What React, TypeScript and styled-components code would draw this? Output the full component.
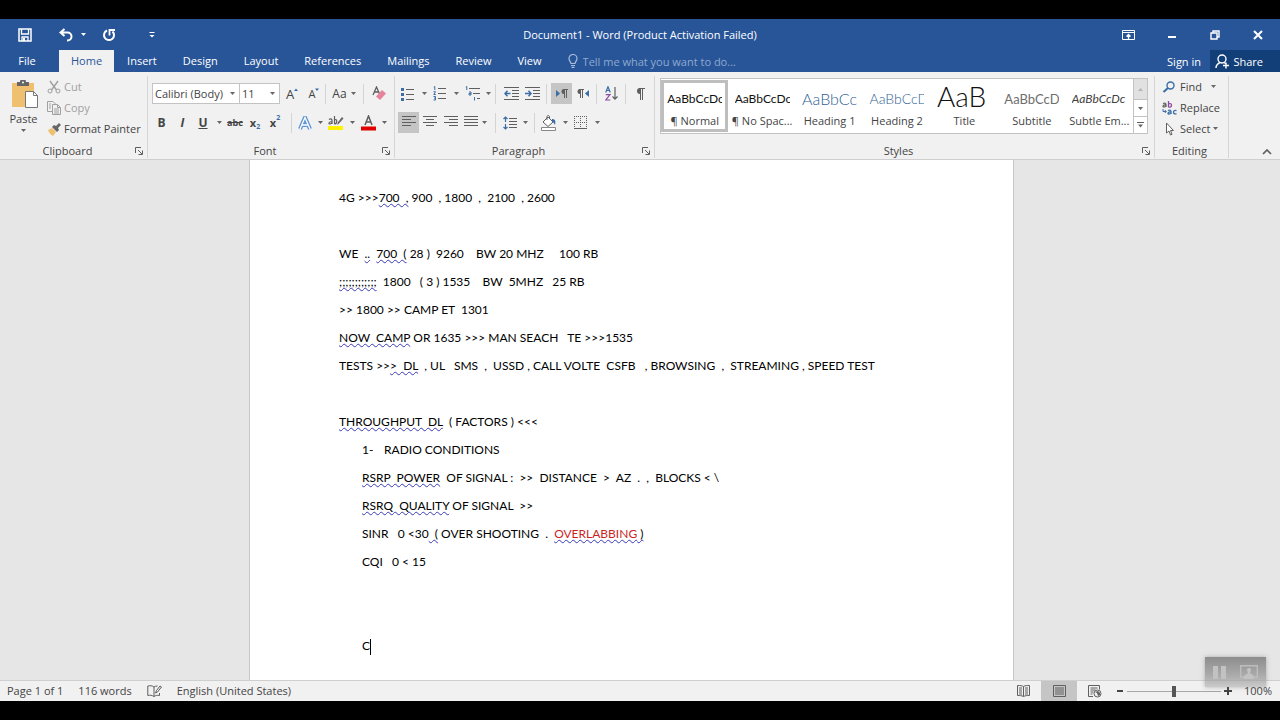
import React from "react";
import styled, { createGlobalStyle, css } from "styled-components";

const UI = `"Open Sans", "Noto Sans", "Liberation Sans", sans-serif`;
const DOC = `Lato, "Liberation Sans", sans-serif`;

const color = {
  blue: "#285598",
  share: "#133f78",
  ribbon: "#f1f1f1",
  canvas: "#e6e6e6",
  line: "#cfcfcf",
  text: "#444444",
  icon: "#5f5f5f",
  accent: "#3a6ea5",
  active: "#c5c5c5",
  muted: "#a0a0a0",
};

const GlobalStyle = createGlobalStyle`
  * { box-sizing: border-box; }
  body { margin: 0; background: #000; font-family: ${UI}; font-size: 11px; color: ${color.text}; }
  button, select, input { font: inherit; color: inherit; }
  svg { display: block; flex: none; }
`;

const Screen = styled.div`
  position: relative;
  display: flex;
  flex-direction: column;
  height: 100vh;
  padding: 19px 0;
  background: #000;
`;

const Plain = styled.button`
  display: flex;
  align-items: center;
  justify-content: center;
  margin: 0;
  padding: 0;
  border: 0;
  background: transparent;
  white-space: nowrap;
`;

/* title bar */

const TitleBar = styled.header`
  display: grid;
  grid-template-columns: 1fr auto 1fr;
  align-items: center;
  flex: none;
  height: 31px;
  background: ${color.blue};
  color: #fff;
`;

const QuickAccess = styled.div`
  display: flex;
  align-items: center;
  padding-left: 14px;
`;

const BarButton = styled(Plain)<{ $w: number; $before?: number }>`
  width: ${(p) => p.$w}px;
  height: 27px;
  margin-left: ${(p) => p.$before ?? 0}px;
`;

const WindowTitle = styled.h1`
  margin: 0;
  font-size: 11px;
  font-weight: 400;
  line-height: 16px;
`;

const WindowButtons = styled.div`
  display: flex;
  justify-content: flex-end;
`;

/* tab strip */

const TabStrip = styled.nav`
  display: flex;
  align-items: stretch;
  flex: none;
  height: 22px;
  background: ${color.blue};
  color: #fff;
`;

const Tab = styled(Plain)<{ $active?: boolean; $file?: boolean }>`
  padding: 0 ${(p) => (p.$active ? 12 : 13)}px;
  line-height: 22px;
  ${(p) => p.$file && css`width: 59px; padding: 0 5px 0 0;`}
  ${(p) => p.$active && css`background: ${color.ribbon}; color: ${color.blue};`}
`;

const TellMe = styled.label`
  display: flex;
  align-items: center;
  flex: 1;
  gap: 5px;
  padding-left: 13px;
  color: #a9bddb;
`;

const TellMeInput = styled.input`
  flex: 1;
  min-width: 0;
  padding: 0;
  border: 0;
  outline: 0;
  background: transparent;
  &::placeholder { color: #8eaad0; opacity: 1; }
`;

const SignIn = styled(Plain)`
  padding: 0 9px;
`;

const Share = styled(Plain)`
  gap: 3px;
  width: 70px;
  padding-right: 17px;
  justify-content: flex-end;
  background: ${color.share};
`;

/* ribbon */

const Ribbon = styled.section`
  display: flex;
  flex: none;
  height: 88px;
  padding-top: 4px;
  border-bottom: 1px solid ${color.line};
  background: ${color.ribbon};
`;

const Group = styled.section<{ $w?: number }>`
  display: flex;
  flex-direction: column;
  ${(p) => (p.$w ? css`flex: none; width: ${p.$w}px;` : css`flex: 1; min-width: 0;`)}
  height: 82px;
  border-right: 1px solid #d6d6d6;
`;

const GroupBody = styled.div`
  flex: 1;
  min-height: 0;
`;

const GroupFoot = styled.footer`
  display: flex;
  align-items: center;
  height: 14px;
  padding-right: 4px;
  line-height: 14px;
`;

const GroupName = styled.span`
  flex: 1;
  text-align: center;
`;

const Tail = styled.div`
  display: flex;
  align-items: flex-end;
  justify-content: flex-end;
  flex: none;
  width: 51px;
  padding: 0 8px 4px 0;
`;

const Row = styled.div<{ $pad: number; $top: number }>`
  display: flex;
  align-items: center;
  height: 21px;
  padding-left: ${(p) => p.$pad}px;
  margin-top: ${(p) => p.$top}px;
`;

const Tool = styled(Plain)<{ $w: number; $on?: boolean }>`
  flex: none;
  width: ${(p) => p.$w}px;
  height: 21px;
  background: ${(p) => (p.$on ? color.active : "transparent")};
`;

const Glyph = styled.span<{ $size?: number; $bold?: boolean; $italic?: boolean; $line?: string }>`
  font-size: ${(p) => p.$size ?? 12}px;
  font-weight: ${(p) => (p.$bold ? 700 : 400)};
  font-style: ${(p) => (p.$italic ? "italic" : "normal")};
  text-decoration: ${(p) => p.$line ?? "none"};
  line-height: 16px;
`;

const Script = styled.span<{ $up?: boolean }>`
  align-self: ${(p) => (p.$up ? "flex-start" : "flex-end")};
  padding: 2px 0;
  color: ${color.accent};
  font-size: 7px;
  font-weight: 700;
  line-height: 8px;
`;

const Divider = styled.span<{ $before?: number; $after?: number }>`
  flex: none;
  width: 1px;
  height: 20px;
  margin-left: ${(p) => p.$before ?? 4}px;
  margin-right: ${(p) => p.$after ?? 4}px;
  background: #d4d4d4;
`;

const SelectWrap = styled.label<{ $w: number }>`
  position: relative;
  flex: none;
  width: ${(p) => p.$w}px;
  height: 21px;
  & + & { margin-left: -1px; }
  svg { position: absolute; right: 5px; top: 9px; pointer-events: none; }
`;

const Select = styled.select`
  width: 100%;
  height: 21px;
  padding: 0 0 0 2px;
  border: 1px solid #c3c3c3;
  border-radius: 0;
  background: #fff;
  appearance: none;
`;

const ClipboardBody = styled(GroupBody)`
  display: flex;
`;

const PasteButton = styled(Plain)`
  flex-direction: column;
  justify-content: flex-start;
  width: 47px;
  padding-top: 4px;
  line-height: 16px;
  gap: 2px;
`;

const Stack = styled.div<{ $pad?: number }>`
  display: flex;
  flex-direction: column;
  align-items: flex-start;
  padding-left: ${(p) => p.$pad ?? 0}px;
`;

const TextTool = styled(Plain)<{ $off?: boolean }>`
  flex: none;
  gap: 3px;
  height: 21px;
  color: ${(p) => (p.$off ? color.muted : color.text)};
`;

const Gallery = styled.div`
  display: grid;
  grid-template-columns: minmax(0, 1fr) 14px;
  height: 56px;
  margin: 2px 6px 0 5px;
  border: 1px solid #c3c3c3;
  background: #fff;
`;

const Cards = styled.div`
  display: grid;
  grid-template-columns: repeat(7, minmax(0, 1fr));
  padding: 1px 0;
`;

const Card = styled(Plain)<{ $on?: boolean }>`
  flex-direction: column;
  justify-content: flex-end;
  overflow: hidden;
  border: 3px solid ${(p) => (p.$on ? "#bebebe" : "transparent")};
`;

const Sample = styled.span<{ $size: number; $line?: number; $weight?: number; $color?: string; $italic?: boolean }>`
  width: 55px;
  height: 28px;
  overflow: hidden;
  color: ${(p) => p.$color ?? "#111"};
  font-family: ${DOC};
  font-size: ${(p) => p.$size}px;
  font-style: ${(p) => (p.$italic ? "italic" : "normal")};
  font-weight: ${(p) => p.$weight ?? 400};
  line-height: ${(p) => p.$line ?? 28}px;
  text-align: left;
`;

const CardName = styled.span`
  line-height: 16px;
`;

const Scroller = styled.div`
  display: grid;
  grid-template-rows: 20px 17px 17px;
  border-left: 1px solid #c3c3c3;
`;

const ScrollButton = styled(Plain)<{ $off?: boolean }>`
  background: ${(p) => (p.$off ? "#e1e1e1" : "#fff")};
  & + & { border-top: 1px solid #c3c3c3; }
`;

/* document */

const Canvas = styled.main`
  display: flex;
  justify-content: center;
  flex: 1;
  min-height: 0;
  overflow: hidden;
  padding-right: 17px;
  background: ${color.canvas};
`;

const Sheet = styled.article`
  width: 765px;
  padding: 24px 80px 20px 89px;
  border: solid #c8c8c8;
  border-width: 0 1px;
  background: #fff;
  color: #000;
  font-family: ${DOC};
  font-size: 12px;
`;

const Line = styled.p<{ $indent?: boolean }>`
  height: 28px;
  margin: 0;
  padding-left: ${(p) => (p.$indent ? 23 : 0)}px;
  line-height: 28px;
  white-space: pre;
`;

const Flag = styled.span`
  text-decoration: underline wavy #3a38b8 1px;
  text-decoration-skip-ink: none;
  text-underline-offset: 1px;
`;

const Red = styled.span`
  color: #cc1f1f;
`;

const Marker = styled.span`
  display: inline-block;
  width: 22px;
`;

const Caret = styled.span`
  display: inline-block;
  width: 1px;
  height: 16px;
  background: #000;
  vertical-align: middle;
`;

/* status bar */

const StatusBar = styled.footer`
  display: flex;
  align-items: stretch;
  flex: none;
  height: 21px;
  border-top: 1px solid ${color.line};
  background: ${color.ribbon};
  line-height: 20px;
`;

const StatusItem = styled.span<{ $left: number }>`
  display: flex;
  align-items: center;
  padding-left: ${(p) => p.$left}px;
  white-space: nowrap;
`;

const Spacer = styled.div`
  flex: 1;
`;

const View = styled(Plain)<{ $on?: boolean }>`
  width: 36px;
  background: ${(p) => (p.$on ? color.active : "transparent")};
`;

const ZoomButton = styled(Plain)`
  width: 14px;
`;

const Zoom = styled.input`
  width: 94px;
  height: 20px;
  margin: 0;
  appearance: none;
  background: linear-gradient(#a8a8a8, #a8a8a8) center / 100% 1px no-repeat;
  &::-webkit-slider-thumb { appearance: none; width: 4px; height: 11px; background: #555; }
`;

const Percent = styled.output`
  width: 45px;
  padding-right: 8px;
  text-align: right;
`;

const Recorder = styled.aside`
  position: absolute;
  right: 14px;
  bottom: 33px;
  display: flex;
  align-items: center;
  justify-content: center;
  gap: 14px;
  width: 61px;
  height: 30px;
  background: linear-gradient(rgba(125, 125, 125, 0.85), rgba(150, 150, 150, 0.75) 60%, rgba(175, 175, 175, 0.6));
  box-shadow: 0 0 4px rgba(110, 110, 110, 0.5);
`;

/* icons */

type IconProps = { w: number; h: number; children: React.ReactNode; stroke?: string };
const Icon = ({ w, h, children, stroke = color.icon }: IconProps) => (
  <svg width={w} height={h} viewBox={`0 0 ${w} ${h}`} fill="none" stroke={stroke} aria-hidden="true">
    {children}
  </svg>
);

const Drop = ({ fill = "#666" }: { fill?: string }) => (
  <svg width="5" height="3" viewBox="0 0 5 3" aria-hidden="true">
    <path d="M0 0h5L2.500 3z" fill={fill} />
  </svg>
);

const Launcher = () => (
  <Icon w={8} h={8}>
    <path d="M.5 6V.5H6M3 3l4 4M7.500 3.500v4h-4" />
  </Icon>
);

const Foot = ({ label, launch = true }: { label: string; launch?: boolean }) => (
  <GroupFoot>
    <GroupName>{label}</GroupName>
    {launch && (
      <Plain aria-label={`${label} settings`}>
        <Launcher />
      </Plain>
    )}
  </GroupFoot>
);

const Lines = ({ rows }: { rows: [number, number][] }) => (
  <Icon w={14} h={13}>
    {rows.map(([a, b], i) => (
      <path key={i} d={`M${a} ${i * 3 + 0.5}H${b}`} />
    ))}
  </Icon>
);

const DropTool = ({ w = 6, label }: { w?: number; label: string }) => (
  <Tool $w={w} aria-label={label}>
    <Drop />
  </Tool>
);

const tabs = ["Insert", "Design", "Layout", "References", "Mailings", "Review", "View"];

const styles = [
  { name: "¶ Normal", text: "AaBbCcDc", size: 12 },
  { name: "¶ No Spac...", text: "AaBbCcDc", size: 12 },
  { name: "Heading 1", text: "AaBbCc", size: 16, weight: 300, color: "#2e5f95" },
  { name: "Heading 2", text: "AaBbCcD", size: 14, weight: 300, color: "#2e5f95" },
  { name: "Title", text: "AaB", size: 28, line: 22, weight: 300 },
  { name: "Subtitle", text: "AaBbCcD", size: 13, color: "#6e6e6e" },
  { name: "Subtle Em...", text: "AaBbCcDc", size: 12, color: "#404040", italic: true },
];

export default function App() {
  return (
    <Screen>
      <GlobalStyle />
      <TitleBar>
        <QuickAccess>
          <BarButton $w={22} aria-label="Save">
            <Icon w={14} h={14} stroke="#fff">
              <path d="M1 1h12v12H1z" strokeWidth="1.500" />
              <path d="M3.500 1v5h7V1M4 13V9h6v4" strokeWidth="1.300" />
              <path d="M5 10h2v3H5z" fill="#fff" stroke="none" />
            </Icon>
          </BarButton>
          <BarButton $w={24} $before={18} aria-label="Undo">
            <Icon w={14} h={14} stroke="#fff">
              <path d="M5.500 1L1.500 4.500l4 3.500M2 4.500h6.500a4 4 0 0 1 0 8H8" strokeWidth="2" />
            </Icon>
          </BarButton>
          <BarButton $w={6} $before={2} aria-label="Undo history">
            <Drop fill="#fff" />
          </BarButton>
          <BarButton $w={18} $before={14} aria-label="Repeat">
            <Icon w={14} h={14} stroke="#fff">
              <path d="M5 2.500A5 5 0 1 0 10.500 3.500" strokeWidth="2" />
              <path d="M7.500 7.500V2H13" strokeWidth="1.800" />
            </Icon>
          </BarButton>
          <BarButton $w={16} $before={26} aria-label="Customize Quick Access Toolbar">
            <Icon w={6} h={6} stroke="#fff">
              <path d="M.5 .5h5" />
              <path d="M.5 3h5L3 5.500z" fill="#fff" stroke="none" />
            </Icon>
          </BarButton>
        </QuickAccess>
        <WindowTitle>Document1 - Word (Product Activation Failed)</WindowTitle>
        <WindowButtons>
          <BarButton $w={44} aria-label="Ribbon display options">
            <Icon w={13} h={10} stroke="#fff">
              <path d="M.5 .5h12v9H.5zM.5 2.500h12" />
              <path d="M6.500 9V5M4.500 6.500l2-2 2 2" strokeWidth="1.300" />
            </Icon>
          </BarButton>
          <BarButton $w={43} aria-label="Minimize">
            <Icon w={8} h={8} stroke="#fff">
              <path d="M0 6h8" strokeWidth="2" />
            </Icon>
          </BarButton>
          <BarButton $w={43} aria-label="Restore">
            <Icon w={10} h={10} stroke="#fff">
              <path d="M3 3V1h6v6H7M1 3h6v6H1z" strokeWidth="1.400" />
            </Icon>
          </BarButton>
          <BarButton $w={44} aria-label="Close">
            <Icon w={10} h={10} stroke="#fff">
              <path d="M1 1l8 8M9 1L1 9" strokeWidth="2" />
            </Icon>
          </BarButton>
        </WindowButtons>
      </TitleBar>

      <TabStrip>
        <Tab $file>File</Tab>
        <Tab $active>Home</Tab>
        {tabs.map((t) => (
          <Tab key={t}>{t}</Tab>
        ))}
        <TellMe>
          <Icon w={10} h={14} stroke="#a9bddb">
            <path d="M3 9.500C3 8 1 7 1 4.500a4 4 0 0 1 8 0C9 7 7 8 7 9.500zM3 11.500h4M3.500 13.400h3" strokeWidth="1.200" />
          </Icon>
          <TellMeInput aria-label="Tell me" placeholder="Tell me what you want to do..." />
        </TellMe>
        <SignIn>Sign in</SignIn>
        <Share>
          <Icon w={15} h={15} stroke="#fff">
            <circle cx="7" cy="5" r="4" strokeWidth="1.400" />
            <path d="M1 14c0-3 2-4.500 4-5.500M9 8.500l1.500 1M11 8.500v6M8 11.500h6" strokeWidth="1.400" />
          </Icon>
          Share
        </Share>
      </TabStrip>

      <Ribbon>
        <Group $w={148}>
          <ClipboardBody>
            <PasteButton>
              <Icon w={28} h={29}>
                <path d="M2 3h22v24H2z" fill="#eec06f" stroke="none" />
                <path d="M7 2h3a3 3 0 0 1 6 0h3v4H7z" fill="#666" stroke="none" />
                <circle cx="13" cy="2.500" r="1" fill="#fff" stroke="none" />
                <path d="M15.500 11.500h8l4 4v12h-12z" fill="#fff" stroke="#777" />
                <path d="M23.500 11.500v4h4" stroke="#777" />
              </Icon>
              Paste
              <Drop />
            </PasteButton>
            <Stack>
              <TextTool $off>
                <Icon w={14} h={14} stroke={color.muted}>
                  <path d="M3 1l6.500 9M11 1L4.500 10" strokeWidth="1.400" />
                  <circle cx="3" cy="11" r="2" />
                  <circle cx="11" cy="11" r="2" />
                </Icon>
                Cut
              </TextTool>
              <TextTool $off>
                <Icon w={14} h={14} stroke={color.muted}>
                  <path d="M6 10.500H.5V.5H6L8.500 3M5.500 3.500h5l3 3v7h-8zM10.500 3.500v3h3M7 8h5M7 10h5M7 12h5M2 3h2M2 5h2M2 7h2" />
                </Icon>
                Copy
              </TextTool>
              <TextTool>
                <Icon w={14} h={14}>
                  <path d="M1 8l4-2 4 4-3 4c-2-1-4-3-5-6z" fill="#eec06f" stroke="none" />
                  <path d="M5 5l2-2 2 1 3-3 2 2-3 3 1 2-2 2z" fill="#666" stroke="none" />
                </Icon>
                Format Painter
              </TextTool>
            </Stack>
          </ClipboardBody>
          <Foot label="Clipboard" />
        </Group>

        <Group $w={247}>
          <GroupBody>
            <Row $pad={4} $top={7}>
              <SelectWrap $w={88}>
                <Select aria-label="Font">
                  <option>Calibri (Body)</option>
                </Select>
                <Drop />
              </SelectWrap>
              <SelectWrap $w={41}>
                <Select aria-label="Font size">
                  <option>11</option>
                </Select>
                <Drop />
              </SelectWrap>
              <Tool $w={24} aria-label="Grow font">
                <Glyph $size={13}>A</Glyph>
                <Icon w={4} h={12}>
                  <path d="M0 3l2-2.500L4 3z" fill={color.accent} stroke="none" />
                </Icon>
              </Tool>
              <Tool $w={20} aria-label="Shrink font">
                <Glyph $size={11}>A</Glyph>
                <Icon w={4} h={12}>
                  <path d="M0 .5h4L2 3z" fill={color.accent} stroke="none" />
                </Icon>
              </Tool>
              <Divider $before={1} $after={3} />
              <Tool $w={21} aria-label="Change case">
                <Glyph>Aa</Glyph>
              </Tool>
              <DropTool label="Change case options" />
              <Divider $before={7} $after={5} />
              <Tool $w={20} aria-label="Clear formatting">
                <Icon w={14} h={15}>
                  <path d="M1 9L4.500 1 8 9M2.200 6h4.600" strokeWidth="1.300" />
                  <path d="M4 10.500L10 4l4 3.500L8 14z" fill="#e5849a" stroke="none" />
                </Icon>
              </Tool>
            </Row>
            <Row $pad={3} $top={8}>
              <Tool $w={21} aria-label="Bold">
                <Glyph $bold>B</Glyph>
              </Tool>
              <Tool $w={21} aria-label="Italic">
                <Glyph $bold $italic>I</Glyph>
              </Tool>
              <Tool $w={20} aria-label="Underline">
                <Glyph $bold $line="underline">U</Glyph>
              </Tool>
              <DropTool w={12} label="Underline options" />
              <Tool $w={20} aria-label="Strikethrough">
                <Glyph $size={9} $bold $line="line-through">abc</Glyph>
              </Tool>
              <Tool $w={20} aria-label="Subscript">
                <Glyph $size={11} $bold>x</Glyph>
                <Script>2</Script>
              </Tool>
              <Tool $w={20} aria-label="Superscript">
                <Glyph $size={11} $bold>x</Glyph>
                <Script $up>2</Script>
              </Tool>
              <Divider $before={6} $after={1} />
              <Tool $w={24} aria-label="Text effects">
                <Icon w={14} h={14}>
                  <path d="M2 13L7 1.500 12 13M4 9h6" stroke="#5f94d2" strokeWidth="4" />
                  <path d="M2 13L7 1.500 12 13M4 9h6" stroke="#fff" strokeWidth="1.300" />
                </Icon>
              </Tool>
              <DropTool label="Text effects options" />
              <Tool $w={26} aria-label="Highlight color">
                <Icon w={16} h={16}>
                  <path d="M0 11h15v4H0z" fill="#fff200" stroke="none" />
                  <path d="M1 4.500c2-1.500 3 0 3 1V9M4 6.500C1 6.500 0 9 2 9c1 0 2-1 2-2M6.500 1v8M6.500 5c3-2 3 4 0 4" strokeWidth="1.200" />
                  <path d="M9 10l1-3 4-5 1.500 1.500-4.500 5z" fill="#666" stroke="none" />
                </Icon>
              </Tool>
              <DropTool label="Highlight color options" />
              <Tool $w={26} aria-label="Font color">
                <Icon w={15} h={16}>
                  <path d="M0 11.500h15v4H0z" fill="#e00000" stroke="none" />
                  <path d="M4 10l3.500-9L11 10M5 7h5" strokeWidth="1.500" />
                </Icon>
              </Tool>
              <DropTool label="Font color options" />
            </Row>
          </GroupBody>
          <Foot label="Font" />
        </Group>

        <Group $w={260}>
          <GroupBody>
            <Row $pad={0} $top={7}>
              <Tool $w={26} aria-label="Bullets">
                <Icon w={14} h={14}>
                  <path d="M5 2.500h8M5 7.500h8M5 12.500h8" />
                  <path d="M0 1h3v3H0zM0 6h3v3H0zM0 11h3v3H0z" fill={color.accent} stroke="none" />
                </Icon>
              </Tool>
              <DropTool label="Bullet library" />
              <Tool $w={26} aria-label="Numbering">
                <Icon w={14} h={15}>
                  <path d="M5 2.500h8M5 7.500h8M5 12.500h8" />
                  <path d="M.8 1l1-.5V4M.5 5.700h2L.8 8.500h2M.5 10.500h2v3.500h-2M1 12.200h1.500" stroke={color.accent} />
                </Icon>
              </Tool>
              <DropTool label="Numbering library" />
              <Tool $w={26} aria-label="Multilevel list">
                <Icon w={15} h={15}>
                  <path d="M4 2.500h11M8 7.500h7M12 12.500h3" />
                  <path d="M.8 1l1-.5V4M4 6h2v3H4v-1.500h2M9.500 11v3.500" stroke={color.accent} />
                </Icon>
              </Tool>
              <DropTool label="List library" />
              <Divider />
              <Tool $w={22} aria-label="Decrease indent">
                <Icon w={15} h={13}>
                  <path d="M0 .5h15M8 3.500h7M8 6.500h7M8 9.500h7M0 12.500h15" />
                  <path d="M6.500 6.500H1M3.500 3.800L1 6.500l2.500 2.700" stroke={color.accent} strokeWidth="1.500" />
                </Icon>
              </Tool>
              <Tool $w={20} aria-label="Increase indent">
                <Icon w={15} h={13}>
                  <path d="M0 .5h15M8 3.500h7M8 6.500h7M8 9.500h7M0 12.500h15" />
                  <path d="M0 6.500h6M3.500 3.800L6 6.500 3.500 9.200" stroke={color.accent} strokeWidth="1.500" />
                </Icon>
              </Tool>
              <Divider />
              <Tool $w={21} $on aria-label="Left-to-right">
                <Icon w={12} h={9}>
                  <path d="M0 1v7l4-3.500z" fill={color.accent} stroke="none" />
                  <path d="M8.500 0v9M10.500 0v9M7 .5h5" />
                  <path d="M8 0a2.500 2.500 0 0 0 0 5z" fill={color.icon} stroke="none" />
                </Icon>
              </Tool>
              <Tool $w={21} aria-label="Right-to-left">
                <Icon w={12} h={9}>
                  <path d="M12 1v7L8 4.500z" fill={color.accent} stroke="none" />
                  <path d="M3.500 0v9M5.500 0v9M2 .5h5" />
                  <path d="M3 0a2.500 2.500 0 0 0 0 5z" fill={color.icon} stroke="none" />
                </Icon>
              </Tool>
              <Divider $before={3} />
              <Tool $w={20} aria-label="Sort">
                <Icon w={13} h={15}>
                  <path d="M.7 6.500L3 .7l2.300 5.800M1.500 4.500h3" stroke={color.accent} strokeWidth="1.200" />
                  <path d="M.8 8.700h4.200L.8 14h4.500" stroke="#8b4ba0" strokeWidth="1.200" />
                  <path d="M10 1v12M7.500 10.500L10 13.200l2.500-2.700" strokeWidth="1.200" />
                </Icon>
              </Tool>
              <Divider />
              <Tool $w={20} aria-label="Show formatting marks">
                <Icon w={10} h={12}>
                  <path d="M5.500 0v12M7.500 0v12M4 .5h6" />
                  <path d="M5 0a3 3 0 0 0 0 6z" fill={color.icon} stroke="none" />
                </Icon>
              </Tool>
            </Row>
            <Row $pad={3} $top={8}>
              <Tool $w={21} $on aria-label="Align left">
                <Lines rows={[[0, 14], [0, 9], [0, 14], [0, 9]]} />
              </Tool>
              <Tool $w={21} aria-label="Center">
                <Lines rows={[[0, 14], [3, 11], [0, 14], [3, 11]]} />
              </Tool>
              <Tool $w={21} aria-label="Align right">
                <Lines rows={[[0, 14], [5, 14], [0, 14], [5, 14]]} />
              </Tool>
              <Tool $w={20} aria-label="Justify">
                <Lines rows={[[0, 14], [0, 14], [0, 14], [0, 14]]} />
              </Tool>
              <DropTool label="Justify options" />
              <Divider $before={8} $after={2} />
              <Tool $w={24} aria-label="Line spacing">
                <Icon w={14} h={14}>
                  <path d="M6 2.500h8M6 5.500h8M6 8.500h8M6 11.500h8" />
                  <path d="M2.500 1v5M.5 3l2-2 2 2M2.500 8v5M.5 11l2 2 2-2" stroke={color.accent} strokeWidth="1.200" />
                </Icon>
              </Tool>
              <DropTool label="Line spacing options" />
              <Divider $before={6} $after={1} />
              <Tool $w={26} aria-label="Shading">
                <Icon w={16} h={16}>
                  <path d="M7 2l5 5-5 4.500-5-4.500zM6 5V1.500a1.300 1.300 0 0 1 2.500 0V4" fill="#fff" />
                  <path d="M11 4c3 0 4 2 3 6-1-1-1-3-3-3z" fill={color.accent} stroke="none" />
                  <path d="M.5 12.500h14v3H.5z" fill="#fff" stroke="#888" />
                </Icon>
              </Tool>
              <DropTool label="Shading options" />
              <Tool $w={26} aria-label="Borders">
                <Icon w={14} h={13}>
                  <path d="M0 .5h13M0 6.500h13M.5 0v12M6.500 0v12M12.500 0v12" strokeDasharray="1 1" />
                  <path d="M0 12.500h13" />
                </Icon>
              </Tool>
              <DropTool label="Borders options" />
            </Row>
          </GroupBody>
          <Foot label="Paragraph" />
        </Group>

        <Group>
          <GroupBody>
            <Gallery>
              <Cards>
                {styles.map((s, i) => (
                  <Card key={s.name} $on={i === 0}>
                    <Sample $size={s.size} $line={s.line} $weight={s.weight} $color={s.color} $italic={s.italic}>
                      {s.text}
                    </Sample>
                    <CardName>{s.name}</CardName>
                  </Card>
                ))}
              </Cards>
              <Scroller>
                <ScrollButton $off aria-label="Previous styles">
                  <Icon w={5} h={3}>
                    <path d="M0 3h5L2.500 0z" fill="#b5b5b5" stroke="none" />
                  </Icon>
                </ScrollButton>
                <ScrollButton aria-label="Next styles">
                  <Drop />
                </ScrollButton>
                <ScrollButton aria-label="More styles">
                  <Icon w={7} h={6}>
                    <path d="M0 .5h7" />
                    <path d="M1 2.500h5L3.500 5.500z" fill="#666" stroke="none" />
                  </Icon>
                </ScrollButton>
              </Scroller>
            </Gallery>
          </GroupBody>
          <Foot label="Styles" />
        </Group>

        <Group $w={74}>
          <GroupBody>
            <Stack $pad={7}>
              <TextTool>
                <Icon w={15} h={12} stroke={color.accent}>
                  <circle cx="8.500" cy="4.500" r="3.500" strokeWidth="1.400" />
                  <path d="M6 7l-4.500 4" strokeWidth="2" />
                </Icon>
                Find
                <Tool $w={18} as="span">
                  <Drop />
                </Tool>
              </TextTool>
              <TextTool>
                <Icon w={15} h={14}>
                  <path d="M1 2.500c2-1 3 0 3 1V6M4 4C1 3.500 0 6 2 6c1 0 2-1 2-1.500" strokeWidth="1.200" />
                  <path d="M6.500 0v6M6.500 3c4-2 4 4 0 3" stroke="#8b4ba0" strokeWidth="1.300" />
                  <path d="M6 9.500c2-1 3 0 3 1V13M9 11c-3-.5-4 2-2 2 1 0 2-1 2-1.500M14.500 9.700c-4-1.500-4 4.500 0 3" stroke={color.accent} strokeWidth="1.300" />
                  <path d="M1 8v2.500h3M2.800 9l1.500 1.500L2.800 12" stroke={color.accent} />
                </Icon>
                Replace
              </TextTool>
              <TextTool>
                <Icon w={15} h={14}>
                  <path d="M4.500 1v10l2.500-2 1.500 4 1.500-.7-1.500-3.800h3z" fill="#fff" />
                </Icon>
                Select
                <Drop />
              </TextTool>
            </Stack>
          </GroupBody>
          <Foot label="Editing" launch={false} />
        </Group>
        <Tail>
          <Plain aria-label="Collapse the ribbon">
            <Icon w={10} h={6}>
              <path d="M1 5l4-4 4 4" strokeWidth="1.700" />
            </Icon>
          </Plain>
        </Tail>
      </Ribbon>

      <Canvas>
        <Sheet>
          <Line>4G &gt;&gt;&gt;<Flag>700  ,</Flag> 900  , 1800  ,  2100  , 2600</Line>
          <Line />
          <Line>WE  <Flag>..</Flag>  <Flag>700  (</Flag> 28 )  9260    BW 20 MHZ     100 RB</Line>
          <Line><Flag>;;;;;;;;;;;;</Flag>  1800   ( 3 ) 1535    BW  5MHZ   25 RB</Line>
          <Line>&gt;&gt; 1800 &gt;&gt; CAMP ET  1301</Line>
          <Line><Flag>NOW  CAMP</Flag> OR 1635 &gt;&gt;&gt; MAN SEACH   TE &gt;&gt;&gt;1535</Line>
          <Line>TESTS &gt;&gt;<Flag>&gt;  DL</Flag>  , UL   SMS  ,  USSD , CALL VOLTE  CSFB   , BROWSING  ,  STREAMING , SPEED TEST</Line>
          <Line />
          <Line><Flag>THROUGHPUT  DL</Flag>  ( FACTORS ) &lt;&lt;&lt;</Line>
          <Line $indent><Marker>1-</Marker>RADIO CONDITIONS</Line>
          <Line $indent><Flag>RSRP  POWER</Flag>  OF SIGNAL :  &gt;&gt;  DISTANCE  &gt;  AZ  .  ,  BLOCKS &lt; \</Line>
          <Line $indent><Flag>RSRQ  QUALITY</Flag> OF SIGNAL  &gt;&gt;</Line>
          <Line $indent>SINR   0 &lt;30<Flag>  (</Flag> OVER SHOOTING  .  <Flag><Red>OVERLABBING</Red> )</Flag></Line>
          <Line $indent>CQI   0 &lt; 15</Line>
          <Line />
          <Line />
          <Line $indent>C<Caret /></Line>
        </Sheet>
      </Canvas>

      <StatusBar>
        <StatusItem $left={7}>Page 1 of 1</StatusItem>
        <StatusItem $left={15}>116 words</StatusItem>
        <StatusItem $left={15}>
          <Icon w={15} h={13}>
            <path d="M7 11.500V2C5 .5 3 .5 .8 1v9.500c2-.5 4-.5 6.200 1C8.500 10.500 10 10 12.500 10.500V8M7 2c1-.8 2-1 3.500-1M8.500 8l1-2.500L13 1l1.500 1-4 5z" />
          </Icon>
        </StatusItem>
        <StatusItem $left={15}>English (United States)</StatusItem>
        <Spacer />
        <View aria-label="Read mode">
          <Icon w={13} h={12}>
            <path d="M6.500 11.500V1.500C5 .5 3 .5 .5 .5v10c2.500 0 4 0 6 1 2-1 3.500-1 6-1V.5c-2.500 0-4.500 0-6 1M2 3h3M2 5h3M2 7h3M2 9h3M8 3h3M8 5h3M8 7h3M8 9h3" />
          </Icon>
        </View>
        <View $on aria-label="Print layout">
          <Icon w={13} h={12}>
            <path d="M.5 .5h12v11H.5zM2 3h9M2 5h9M2 7h9M2 9h9" />
          </Icon>
        </View>
        <View aria-label="Web layout">
          <Icon w={14} h={13}>
            <path d="M5 11.500H.5V.5h11v4M2.500 3h7M2.500 5h5M2.500 7h3M2.500 9h2" />
            <circle cx="9.500" cy="8.500" r="3.500" />
            <path d="M7 7l2 1 1 3 2-1V8l-2-2z" fill={color.icon} stroke="none" />
          </Icon>
        </View>
        <ZoomButton aria-label="Zoom out">
          <Icon w={6} h={6} stroke="#444"><path d="M0 3h6" strokeWidth="2" /></Icon>
        </ZoomButton>
        <Zoom type="range" min="0" max="100" defaultValue="50" aria-label="Zoom" />
        <ZoomButton aria-label="Zoom in">
          <Icon w={8} h={8} stroke="#444"><path d="M0 4h8M4 0v8" strokeWidth="2" /></Icon>
        </ZoomButton>
        <Percent>100%</Percent>
      </StatusBar>

      <Recorder aria-label="Recording controls">
        <Plain aria-label="Pause recording">
          <Icon w={13} h={13}>
            <path d="M0 0h5v13H0zM8 0h5v13H8z" fill="#c2c2c2" stroke="none" />
          </Icon>
        </Plain>
        <Plain aria-label="Webcam">
          <Icon w={18} h={14} stroke="#bdbdbd">
            <path d="M.7 .7h16.600v11.600H.7z" strokeWidth="1.400" />
            <path d="M9 3a2 2 0 0 1 2 2.500L10 8l4 3v3H4v-3l4-3-1-2.500A2 2 0 0 1 9 3z" fill="#c2c2c2" stroke="none" />
          </Icon>
        </Plain>
      </Recorder>
    </Screen>
  );
}
